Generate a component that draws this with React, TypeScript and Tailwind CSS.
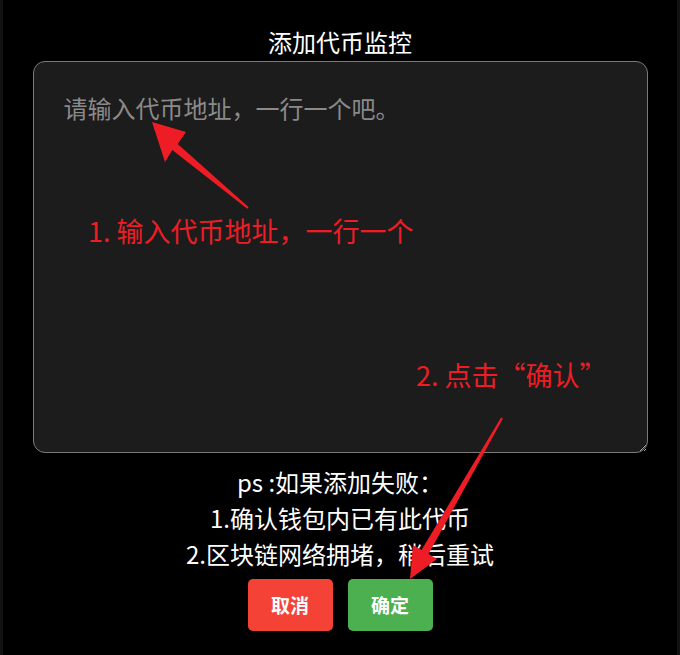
export default function App() {
  return (
    <div
      className="relative flex h-[655px] w-[680px] overflow-hidden bg-black"
      style={{ fontFamily: '"Noto Sans CJK SC", "Liberation Sans", sans-serif' }}
    >
      {/* page behind the overlay */}
      <div className="w-[3px] bg-[#121212]" />

      <div className="flex flex-1 flex-col items-center pt-[26px]">
        <h2 className="h-[32px] text-[24px] leading-[32px] text-white">添加代币监控</h2>

        <textarea
          className="mt-[3px] h-[392px] w-[615px] resize rounded-[12px] border border-[#7a7a7a] bg-[#1c1c1c] px-[30px] pt-[28px] text-[24px] leading-[36px] text-white outline-none [color-scheme:dark] placeholder:text-[#8a8a8a]"
          placeholder="请输入代币地址，一行一个吧。"
        />

        <div className="mt-[11px] text-center text-[24px] leading-[36px] text-white">
          <p>ps :如果添加失败：</p>
          <p>1.确认钱包内已有此代币</p>
          <p>2.区块链网络拥堵，稍后重试</p>
        </div>

        <div className="mt-[7px] flex gap-[15px]">
          <button className="h-[52px] w-[85px] rounded-[5px] bg-[#f44336] text-[19px] font-semibold text-white">
            取消
          </button>
          <button className="h-[52px] w-[85px] rounded-[5px] bg-[#4caf50] text-[19px] font-semibold text-white">
            确定
          </button>
        </div>
      </div>

      <div className="w-[3px] bg-[#121212]" />

      {/* annotations drawn over the screenshot */}
      <p className="absolute left-[88px] top-[217px] text-[27px] leading-[28px] text-[#ee1d25]">
        1. 输入代币地址，一行一个
      </p>
      <p className="absolute left-[416px] top-[361px] text-[27px] leading-[28px] text-[#ee1d25]">
        2. 点击“确认”
      </p>
      <svg className="pointer-events-none absolute left-0 top-0" width="680" height="655">
        <polygon
          fill="#ee1d25"
          points="152,122 186,132 177.7,144 248.7,207.3 247.3,208.7 172.3,150 165,162"
        />
        <polygon
          fill="#ee1d25"
          points="410,579 437,559 428.5,554 502.9,418.5 501.1,417.5 421.5,550 413,545"
        />
      </svg>
    </div>
  );
}
